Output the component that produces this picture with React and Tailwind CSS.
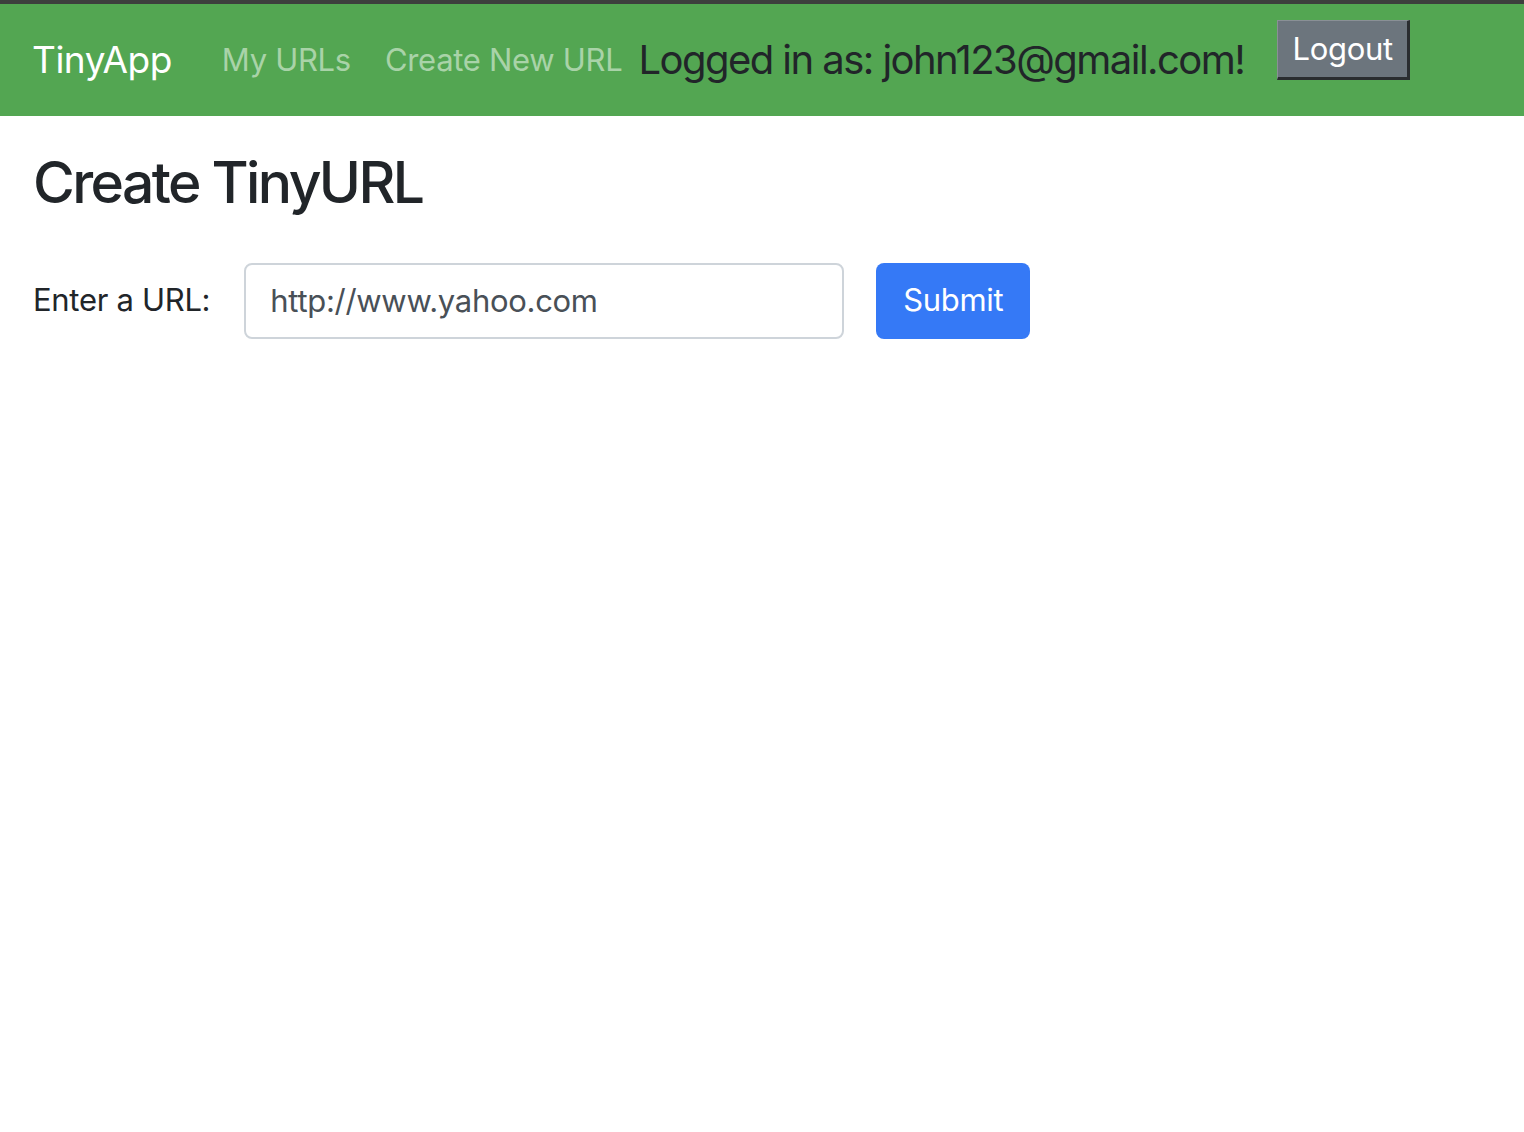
export default function App() {
  return (
    <div className="min-h-[1132px] bg-white" style={{ fontFamily: 'Inter, "Noto Sans", sans-serif' }}>
      <div className="h-[4px] bg-[#3d3f3d]" />
      <nav className="flex h-[112px] items-center bg-[#53a652] pl-[32px]">
        <span className="mr-[50px] text-[37px] tracking-[-0.5px] text-white">TinyApp</span>
        <span className="mr-[34px] text-[31px] tracking-[-0.3px] text-[#a9d3a8]">My URLs</span>
        <span className="mr-[16px] text-[31px] tracking-[-0.3px] text-[#a9d3a8]">Create New URL</span>
        <span className="text-[40px] tracking-[-1.55px] text-[#212529]">Logged in as: john123@gmail.com!</span>
        <button className="mb-[20px] ml-[33px] h-[60px] w-[133px] border-b-[3px] border-r-[3px] border-l-[1px] border-t-[1px] border-b-[#2a2d30] border-r-[#2a2d30] border-l-[#8a9096] border-t-[#8a9096] bg-[#6c757d] text-[31px] tracking-[-0.3px] text-white">
          Logout
        </button>
      </nav>
      <main className="px-[33px] pt-[24px]">
        <h2 className="text-[57px] font-medium tracking-[-2.6px] text-[#212529]">Create TinyURL</h2>
        <form className="mt-[37px] flex items-center" onSubmit={(e) => e.preventDefault()}>
          <label className="mr-[34px] text-[31px] tracking-[-0.3px] text-[#212529]">Enter a URL:</label>
          <input
            defaultValue="http://www.yahoo.com"
            className="h-[76px] w-[600px] rounded-[8px] border-2 border-[#ced4da] px-[24px] text-[31px] tracking-[-0.3px] text-[#495057] outline-none"
          />
          <button className="ml-[32px] h-[76px] w-[154px] rounded-[8px] bg-[#3579f6] text-[31px] tracking-[-0.3px] text-white">
            Submit
          </button>
        </form>
      </main>
    </div>
  );
}
